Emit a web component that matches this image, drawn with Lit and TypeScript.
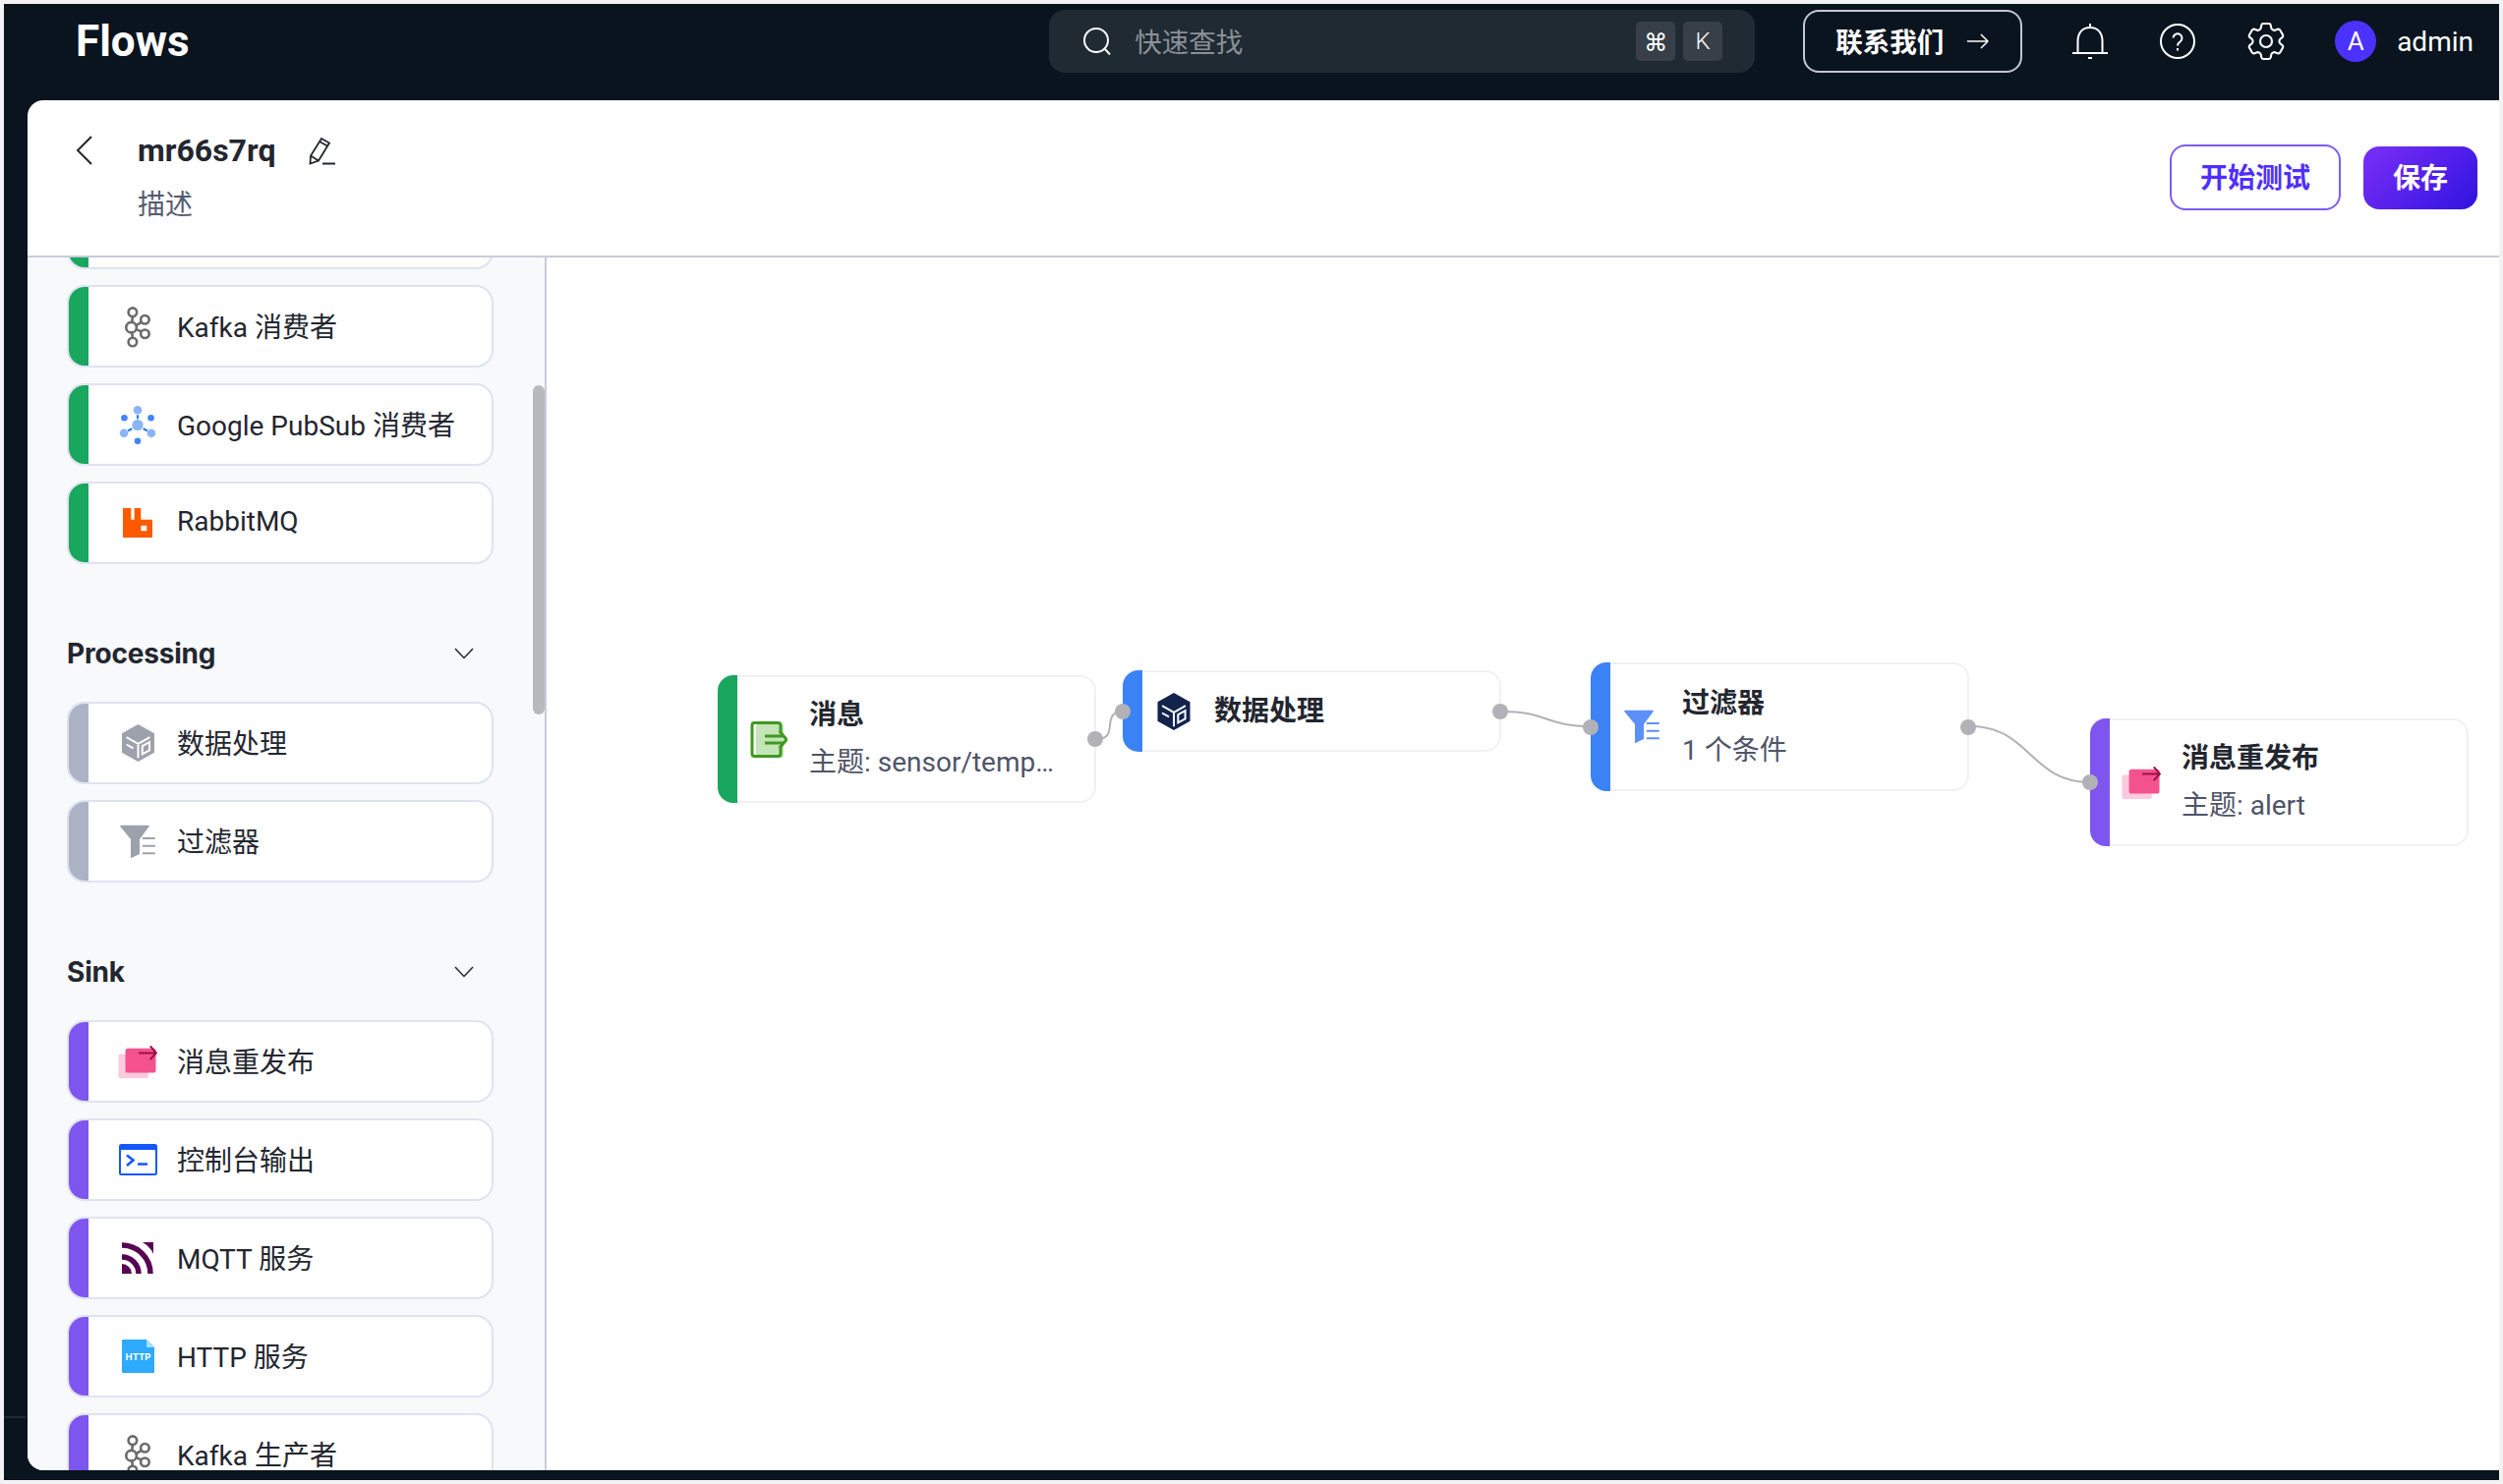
import { LitElement, html, css, svg } from 'lit';
import { customElement } from 'lit/decorators.js';

const kafka = html`<svg width="28" height="43" viewBox="0 0 85 130" fill="none" stroke="#6c6c6c" stroke-width="8">
  ${svg`<path d="M27 32 25 52M38 61 55 50M38 73 55 80M25 82 27 100"/>
  <circle cx="27" cy="20" r="13"/><circle cx="23" cy="67" r="16"/><circle cx="65" cy="43" r="13"/><circle cx="65" cy="87" r="13"/><circle cx="27" cy="112" r="13"/>`}
</svg>`;

const pubsub = html`<svg width="40" height="43" viewBox="0 0 120 130">
  ${svg`<g fill="#8ab4f8"><circle cx="60" cy="65" r="17"/><circle cx="60" cy="19" r="13"/><circle cx="18" cy="90" r="13"/><circle cx="102" cy="90" r="13"/></g>
  <g fill="#4285f4"><circle cx="19" cy="43" r="10"/><circle cx="101" cy="43" r="10"/><circle cx="60" cy="114" r="10"/></g>
  <path d="M60 34V46M30 83 43 76M90 83 77 76" stroke="#1a73e8" stroke-width="6"/>`}
</svg>`;

const rabbit = html`<svg width="30" height="30" viewBox="0 0 90 90">
  ${svg`<path fill-rule="evenodd" fill="#ff5a00" d="M2 0H23Q25 0 25 2V35H35V2Q35 0 37 0H53Q55 0 55 2V35H88Q90 35 90 37V88Q90 90 88 90H2Q0 90 0 88V2Q0 0 2 0ZM58 53Q55 53 55 56V67Q55 70 58 70H70Q73 70 73 67V56Q73 53 70 53Z"/>`}
</svg>`;

const cube = (fill: string, w = 33, h = 38) => html`<svg width=${w} height=${h} viewBox="0 0 100 115">
  ${svg`<path fill=${fill} d="M50 0 100 28V87L50 115 0 87V28Z"/>
  <path fill="none" stroke="#fff" stroke-width="6" d="M14 40 50 60 86 40M50 60V104M63 67 85 55V80L63 92ZM14 62 35 74"/>`}
</svg>`;

const funnel = (fill: string, w = 36, h = 35) => html`<svg width=${w} height=${h} viewBox="0 0 108 105">
  ${svg`<path fill=${fill} d="M3 2H87Q91 2 89 6L60 45V90L33 103V45L1 6Q-1 2 3 2Z"/>
  <path stroke=${fill} stroke-width="6" stroke-linecap="round" d="M71 42H105M71 65H105M71 88H105"/>`}
</svg>`;

const republish = html`<svg width="40" height="33" viewBox="0 0 116 98">
  ${svg`<rect y="25" width="90" height="73" rx="6" fill="#fcc9dd"/>
  <rect x="21" y="8" width="92" height="74" rx="8" fill="#f4528f"/>
  <path fill="none" stroke="#9c0f48" stroke-width="6" d="M61 22H112M96 1 114 22 96 42"/>`}
</svg>`;

const consoleIcon = html`<svg width="39" height="32" viewBox="0 0 39 32" fill="none" stroke="#1557ff">
  ${svg`<rect x="1" y="1" width="37" height="30" rx="1.5" stroke-width="2"/>
  <rect x="1" y="1" width="37" height="5" fill="#1557ff" stroke="none"/>
  <path stroke-width="2.6" d="M8 11.5 14.5 16.5 8 22M19 20.5H29"/>`}
</svg>`;

const mqtt = html`<svg width="32" height="32" viewBox="0 0 32 32">
  ${svg`<path fill="#570553" d="M0 32V22A10 10 0 0 1 10 32ZM21 0H32V12A24 24 0 0 0 21 0Z"/>
  <g fill="none" stroke="#570553" stroke-width="5.5"><circle cx="0" cy="32" r="17"/><circle cx="0" cy="32" r="29"/></g>`}
</svg>`;

const http = html`<svg width="33" height="34" viewBox="0 0 33 34">
  ${svg`<path fill="#2eaaff" d="M1 0H25L33 8V33Q33 34 32 34H1Q0 34 0 33V1Q0 0 1 0Z"/>
  <path fill="#a8dcff" d="M25 0 33 8H25Z"/>
  <text x="16.5" y="20.5" text-anchor="middle" font-family="Inter, sans-serif" font-size="9.5" font-weight="700" fill="#fff">HTTP</text>`}
</svg>`;

const message = html`<svg width="38" height="37" viewBox="0 0 38 37" fill="none">
  ${svg`<rect x="6" y="3" width="28" height="34" rx="2" fill="#c5e4b8"/>
  <path stroke="#3d9a1e" stroke-width="3" d="M31 11V4Q31 1.5 28.5 1.5H4.5Q2 1.5 2 4V33Q2 35.5 4.5 35.5H28.5Q31 35.5 31 33V25"/>
  <path stroke="#3d9a1e" stroke-width="3" d="M15 15H35M15 22H35M30 10 37 18.5 30 27"/>`}
</svg>`;

const chevron = html`<svg width="20" height="12" viewBox="0 0 20 12" fill="none" stroke="#23262f" stroke-width="1.5">
  ${svg`<path d="M1 1 10 10.5 19 1"/>`}
</svg>`;

const gearPath = 'M9.594 3.94c.09-.542.56-.94 1.11-.94h2.593c.55 0 1.02.398 1.11.94l.213 1.281c.063.374.313.686.645.87.074.04.147.083.22.127.325.196.72.257 1.075.124l1.217-.456a1.125 1.125 0 0 1 1.37.49l1.296 2.247a1.125 1.125 0 0 1-.26 1.431l-1.003.827c-.293.241-.438.613-.43.992a7.723 7.723 0 0 1 0 .255c-.008.378.137.75.43.991l1.004.827c.424.35.534.955.26 1.43l-1.298 2.247a1.125 1.125 0 0 1-1.369.491l-1.217-.456c-.355-.133-.75-.072-1.076.124a6.47 6.47 0 0 1-.22.128c-.331.183-.581.495-.644.869l-.213 1.281c-.09.543-.56.94-1.11.94h-2.594c-.55 0-1.019-.398-1.11-.94l-.213-1.281c-.062-.374-.312-.686-.644-.87a6.52 6.52 0 0 1-.22-.127c-.325-.196-.72-.257-1.076-.124l-1.217.456a1.125 1.125 0 0 1-1.369-.49l-1.297-2.247a1.125 1.125 0 0 1 .26-1.431l1.004-.827c.292-.24.437-.613.43-.991a6.932 6.932 0 0 1 0-.255c.007-.38-.138-.751-.43-.992l-1.004-.827a1.125 1.125 0 0 1-.26-1.43l1.297-2.247a1.125 1.125 0 0 1 1.37-.491l1.216.456c.356.133.751.072 1.076-.124.072-.044.146-.086.22-.128.332-.183.582-.495.644-.869l.214-1.28Z';

type Item = { label: string; icon: unknown };

const sections: { title: string; tone: string; items: Item[] }[] = [
  {
    title: 'Processing',
    tone: 'grey',
    items: [
      { label: '数据处理', icon: cube('#9da1ab') },
      { label: '过滤器', icon: funnel('#9da1ab') },
    ],
  },
  {
    title: 'Sink',
    tone: 'purple',
    items: [
      { label: '消息重发布', icon: republish },
      { label: '控制台输出', icon: consoleIcon },
      { label: 'MQTT 服务', icon: mqtt },
      { label: 'HTTP 服务', icon: http },
      { label: 'Kafka 生产者', icon: kafka },
    ],
  },
];

const sources: Item[] = [
  { label: 'Kafka 消费者', icon: kafka },
  { label: 'Google PubSub 消费者', icon: pubsub },
  { label: 'RabbitMQ', icon: rabbit },
];

// canvas coordinates, the canvas starts at 556,262 on the page
const nodes = [
  { x: 174, y: 425, h: 130, tone: 'green', title: '消息', sub: '主题: sensor/temperature', icon: message, left: false, right: true },
  { x: 586, y: 420, h: 83, tone: 'blue', title: '数据处理', sub: '', icon: cube('#13234d', 34, 38), left: true, right: true },
  { x: 1062, y: 412, h: 131, tone: 'blue', title: '过滤器', sub: '1 个条件', icon: funnel('#5b8ff9'), left: true, right: true },
  { x: 1570, y: 469, h: 130, tone: 'purple', title: '消息重发布', sub: '主题: alert', icon: republish, left: true, right: false },
];

const edges = [
  'M560 490C583 490 563 462 586 462',
  'M972 462C1017 462 1017 477 1062 477',
  'M1448 477C1509 477 1509 534 1570 534',
];

@customElement('app-root')
export class AppRoot extends LitElement {
  static styles = css`
    :host {
      display: block;
      height: 1510px;
      box-sizing: border-box;
      padding: 4px 4px 4px 4px;
      background: #f2f2f2;
      font-family: Roboto, 'Noto Sans CJK SC', sans-serif;
      color: #23262f;
      overflow: hidden;
    }
    .frame {
      height: 1502px;
      background: #0a141e;
      display: flex;
      flex-direction: column;
      position: relative;
    }
    .rail-line {
      position: absolute;
      left: 0;
      top: 1437px;
      width: 22px;
      height: 2px;
      background: #1f2a33;
    }
    .top {
      height: 64px;
      margin: 6px 0 28px;
      padding: 0 26px 0 73px;
      display: flex;
      align-items: center;
      color: #fff;
      flex: none;
    }
    .logo {
      font-size: 44px;
      font-weight: 700;
      margin-right: auto;
    }
    .search {
      width: 718px;
      height: 64px;
      box-sizing: border-box;
      background: #1f2a33;
      border-radius: 16px;
      display: flex;
      align-items: center;
      padding: 0 33px 0 35px;
      margin-right: 49px;
    }
    .placeholder {
      font-size: 27.5px;
      color: #8b9096;
      margin-left: 24px;
      margin-right: auto;
      padding-bottom: 2px;
    }
    .key {
      width: 40px;
      height: 40px;
      margin-left: 8px;
      border-radius: 5px;
      background: #374048;
      display: flex;
      align-items: center;
      justify-content: center;
      font-size: 24px;
      font-weight: 300;
    }
    .key.cmd {
      font-family: Inter, sans-serif;
      font-weight: 400;
    }
    .contact {
      width: 223px;
      height: 64px;
      box-sizing: border-box;
      border: 2px solid #c3c7cf;
      border-radius: 16px;
      display: flex;
      align-items: center;
      padding-left: 31px;
      gap: 24px;
      font-size: 27.5px;
      font-weight: 600;
      margin-right: 51px;
    }
    .contact span {
      padding-bottom: 3px;
    }
    .tool {
      display: block;
      margin-right: 53px;
    }
    .tool.gear {
      margin-right: 51px;
    }
    .avatar {
      width: 42px;
      height: 42px;
      border-radius: 50%;
      background: #4b32ff;
      display: flex;
      align-items: center;
      justify-content: center;
      font-size: 26px;
      margin-right: 21px;
    }
    .user {
      font-size: 28px;
    }
    .panel {
      flex: 1;
      min-height: 0;
      margin: 0 0 10px 24px;
      background: #fff;
      border-radius: 16px 0 0 16px;
      overflow: hidden;
      display: flex;
      flex-direction: column;
    }
    .head {
      height: 160px;
      flex: none;
      box-sizing: border-box;
      border-bottom: 2px solid #c9ccdc;
      display: flex;
      align-items: flex-start;
      padding: 36px 22px 0 49px;
    }
    .back {
      margin-right: 46px;
      flex: none;
    }
    .title-row {
      display: flex;
      align-items: center;
      height: 30px;
      gap: 34px;
    }
    .name {
      font-size: 32px;
      font-weight: 700;
    }
    .desc {
      font-size: 28px;
      color: #555b70;
      margin-top: 21px;
      line-height: 40px;
    }
    .actions {
      margin-left: auto;
      display: flex;
      align-items: center;
      gap: 23px;
      padding-top: 9px;
    }
    .btn {
      height: 64px;
      box-sizing: border-box;
      border-radius: 16px;
      display: flex;
      align-items: center;
      justify-content: center;
      font-size: 28px;
      font-weight: 600;
      padding-bottom: 4px;
    }
    .btn.test {
      width: 174px;
      height: 67px;
      border: 2.5px solid #7c5cf5;
      color: #4f2fff;
    }
    .btn.save {
      width: 116px;
      color: #fff;
      background: linear-gradient(135deg, #7b2ff7, #3013e0);
    }
    .body {
      flex: 1;
      min-height: 0;
      display: flex;
    }
    .side {
      width: 528px;
      flex: none;
      box-sizing: border-box;
      background: #f7f9fb;
      border-right: 2px solid #c9ccdc;
      padding-left: 40px;
      overflow: hidden;
      position: relative;
    }
    .scroll {
      margin-top: -72px;
    }
    .thumb {
      position: absolute;
      right: 0;
      top: 130px;
      width: 12px;
      height: 335px;
      border-radius: 6px;
      background: #b9b9bb;
    }
    .section {
      margin-top: 71px;
    }
    .section-head {
      height: 40px;
      width: 414px;
      margin-bottom: 29px;
      display: flex;
      align-items: center;
      justify-content: space-between;
      font-family: Inter, 'Noto Sans CJK SC', sans-serif;
      font-size: 28px;
      font-weight: 700;
      letter-spacing: -0.2px;
    }
    .list {
      display: flex;
      flex-direction: column;
      gap: 16px;
    }
    .card {
      width: 434px;
      height: 84px;
      box-sizing: border-box;
      border: 2px solid #dfe3f1;
      border-radius: 18px;
      background: #fff;
      overflow: hidden;
      display: flex;
      align-items: center;
      font-size: 28px;
    }
    .card .label {
      padding-bottom: 3px;
      margin-left: -1px;
    }
    .bar {
      align-self: stretch;
      width: 20px;
      flex: none;
    }
    .green .bar { background: #19a65f; }
    .grey .bar { background: #abb3c4; }
    .purple .bar { background: #7f55ef; }
    .blue .bar { background: #3b82f6; }
    .card .icon {
      width: 60px;
      margin: 0 11px 0 20px;
      display: flex;
      justify-content: center;
      flex: none;
    }
    .canvas {
      flex: 1;
      position: relative;
      background: #fff;
    }
    .edges {
      position: absolute;
      inset: 0;
      width: 100%;
      height: 100%;
    }
    .node {
      position: absolute;
      width: 385px;
      box-sizing: border-box;
      border: 2px solid #f1f1f3;
      border-left: none;
      border-radius: 16px;
      background: #fff;
      display: flex;
      align-items: center;
    }
    .node .bar {
      border-radius: 16px 0 0 16px;
      margin: -2px 0;
    }
    .node .icon {
      width: 64px;
      margin-right: 9px;
      display: flex;
      justify-content: center;
      flex: none;
    }
    .texts {
      min-width: 0;
      width: 250px;
    }
    .node-title {
      font-size: 28px;
      font-weight: 700;
      line-height: 40px;
    }
    .node-sub {
      font-size: 28px;
      line-height: 40px;
      margin-top: 8px;
      color: #4f5468;
      white-space: nowrap;
      overflow: hidden;
      text-overflow: ellipsis;
    }
    .handle {
      position: absolute;
      top: 50%;
      width: 16px;
      height: 16px;
      margin-top: -8px;
      border-radius: 50%;
      background: #b1b1b7;
    }
    .handle.in { left: -8px; }
    .handle.out { right: -9px; }
  `;

  private _card(item: Item, tone: string) {
    return html`
      <div class="card ${tone}">
        <div class="bar"></div>
        <div class="icon">${item.icon}</div>
        <span class="label">${item.label}</span>
      </div>
    `;
  }

  render() {
    return html`
      <div class="frame">
        <div class="rail-line"></div>
        <div class="top">
          <div class="logo">Flows</div>
          <div class="search">
            <svg width="28" height="28" viewBox="0 0 28 28" fill="none" stroke="#fff" stroke-width="2">
              <circle cx="13" cy="13" r="12"/><path d="M22 22 27 27.5"/>
            </svg>
            <span class="placeholder">快速查找</span>
            <span class="key cmd">⌘</span>
            <span class="key">K</span>
          </div>
          <div class="contact">
            <span>联系我们</span>
            <svg width="22" height="16" viewBox="0 0 22 16" fill="none" stroke="#fff" stroke-width="1.5">
              <path d="M0 8H21M14 1 21 8 14 15"/>
            </svg>
          </div>
          <svg class="tool" width="36" height="38" viewBox="0 0 36 38" fill="none" stroke="#fff" stroke-width="2">
            <path d="M18 1V5M5.5 31V19C5.5 10 10.5 5 18 5S30.5 10 30.5 19V31M0 31H36M16 36H20"/>
          </svg>
          <svg class="tool" width="36" height="36" viewBox="0 0 36 36" fill="none" stroke="#fff" stroke-width="2">
            <circle cx="18" cy="18" r="17"/>
            <path d="M13.5 14.5A4.5 4.5 0 1 1 20.5 18.5C18.8 19.6 18 20.5 18 22.5M18 25V27.5"/>
          </svg>
          <svg class="tool gear" width="38" height="38" viewBox="2.5 2.5 19 19" fill="none" stroke="#fff" stroke-width="1.05">
            <path d=${gearPath}/><circle cx="12" cy="12" r="3"/>
          </svg>
          <div class="avatar">A</div>
          <div class="user">admin</div>
        </div>
        <div class="panel">
          <div class="head">
            <svg class="back" width="17" height="30" viewBox="0 0 17 30" fill="none" stroke="#23262f" stroke-width="2">
              <path d="M16 1 2 15 16 29"/>
            </svg>
            <div>
              <div class="title-row">
                <span class="name">mr66s7rq</span>
                <svg width="27" height="29" viewBox="0 0 27 29" fill="none" stroke="#23262f" stroke-width="1.8">
                  <path d="M1.5 27.5 2 19.5 13 2 21 6.5 10 24.5ZM11 5 19 9.5M2 19.5 10 24.5M14 27.5H27"/>
                </svg>
              </div>
              <div class="desc">描述</div>
            </div>
            <div class="actions">
              <div class="btn test">开始测试</div>
              <div class="btn save">保存</div>
            </div>
          </div>
          <div class="body">
            <div class="side">
              <div class="scroll">
                <div class="list">
                  <div class="card green"><div class="bar"></div></div>
                  ${sources.map((s) => this._card(s, 'green'))}
                </div>
                ${sections.map((sec) => html`
                  <div class="section">
                    <div class="section-head"><span>${sec.title}</span>${chevron}</div>
                    <div class="list">${sec.items.map((s) => this._card(s, sec.tone))}</div>
                  </div>
                `)}
              </div>
              <div class="thumb"></div>
            </div>
            <div class="canvas">
              <svg class="edges" fill="none" stroke="#b1b1b7" stroke-width="2">
                ${edges.map((d) => svg`<path d=${d}/>`)}
              </svg>
              ${nodes.map((n) => html`
                <div class="node ${n.tone}" style="left:${n.x}px;top:${n.y}px;height:${n.h}px">
                  <div class="bar"></div>
                  <div class="icon">${n.icon}</div>
                  <div class="texts">
                    <div class="node-title">${n.title}</div>
                    ${n.sub ? html`<div class="node-sub">${n.sub}</div>` : ''}
                  </div>
                  ${n.left ? html`<div class="handle in"></div>` : ''}
                  ${n.right ? html`<div class="handle out"></div>` : ''}
                </div>
              `)}
            </div>
          </div>
        </div>
      </div>
    `;
  }
}
